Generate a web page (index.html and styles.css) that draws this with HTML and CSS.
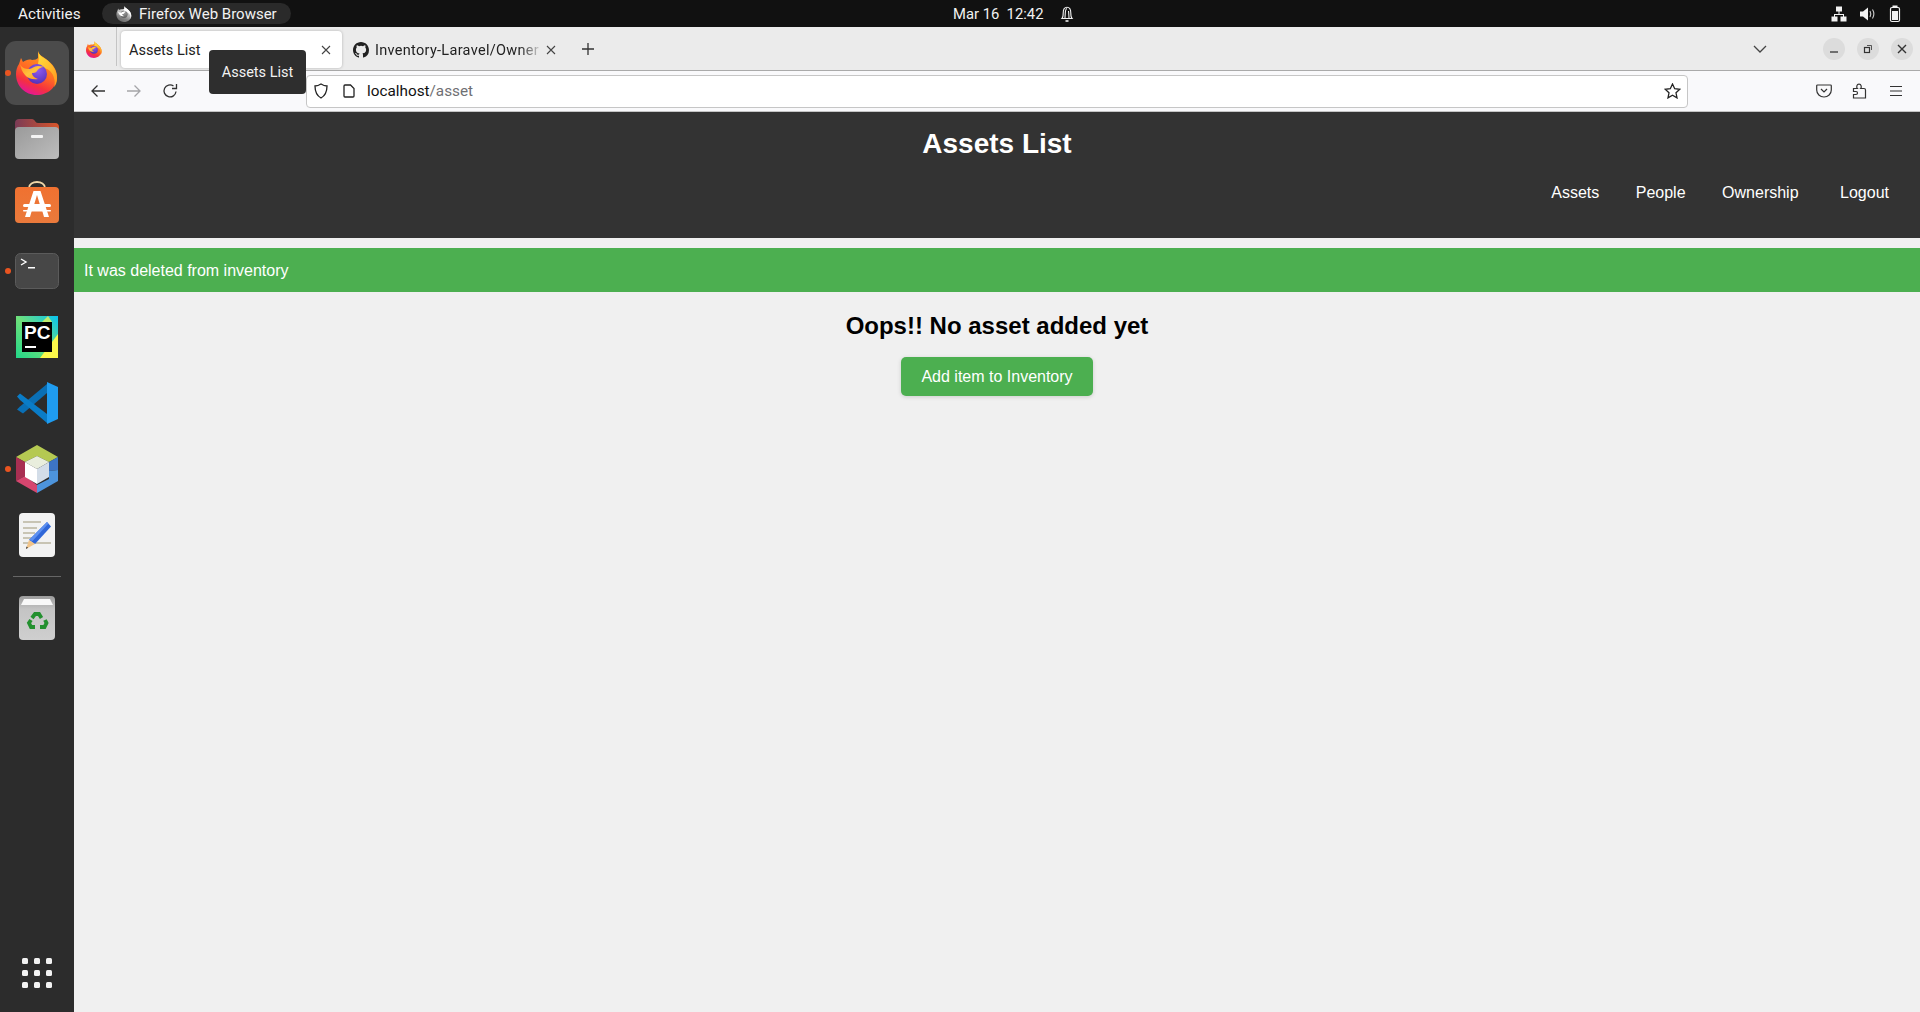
FILE: index.html
```html
<!DOCTYPE html>
<html lang="en">
<head>
<meta charset="utf-8">
<title>Assets List</title>
<link rel="stylesheet" href="styles.css">
</head>
<body>
<svg class="defs" width="0" height="0" aria-hidden="true">
  <defs>
    <linearGradient id="ffBody" x1="0.75" y1="0.1" x2="0.35" y2="1">
      <stop offset="0" stop-color="#ff9a1f"/><stop offset="0.45" stop-color="#ff6a24"/><stop offset="0.75" stop-color="#f5313f"/><stop offset="1" stop-color="#e3169a"/>
    </linearGradient>
    <linearGradient id="ffFlame" x1="0.2" y1="0" x2="0.8" y2="1">
      <stop offset="0" stop-color="#ffde3c"/><stop offset="1" stop-color="#ff9a1f"/>
    </linearGradient>
    <linearGradient id="ffTail" x1="0" y1="0" x2="1" y2="1">
      <stop offset="0" stop-color="#ff9320"/><stop offset="0.5" stop-color="#ffc23c"/><stop offset="1" stop-color="#ff8a1f"/>
    </linearGradient>
    <radialGradient id="ffGlobe" cx="0.55" cy="0.3" r="0.8">
      <stop offset="0" stop-color="#8f5bf0"/><stop offset="1" stop-color="#4d2bb0"/>
    </radialGradient>
    <symbol id="firefox" viewBox="0 0 42 44">
      <path fill="url(#ffBody)" d="M22 0c1 4 4 5 8 8 7 5 11 11 11 18 0 10-9 18-20 18C9 44 0 35 0 23c0-4 1-7 3-10l2-6c1 1 1 3 2 4 3-2 6-3 9-2 3 0 5-1 6-2z"/>
      <path fill="url(#ffFlame)" d="M22 0c1 5 5 6 9 9 6 5 10 11 10 18 0 4-1 7-3 9 1-3 1-6 0-9-1-5-5-9-10-10-3-1-5-2-6-4 1-5 1-9 0-13z"/>
      <circle cx="21" cy="23" r="10" fill="url(#ffGlobe)"/>
      <path fill="url(#ffTail)" d="M4 13c2 4 5 5 9 5 3 0 5-3 9-3 4 0 6 1 6 1-3 0-6 2-7 4-1 2-4 2-5 2 0 3 3 5 6 6-4 1-10 0-13-4-3-3-4-7-5-11z"/>
    </symbol>
  </defs>
</svg>

<header class="topbar">
  <span class="activities">Activities</span>
  <span class="app-pill">
    <svg class="pill-icon" width="16" height="16"><use href="#firefox"/></svg>
    <span>Firefox Web Browser</span>
  </span>
  <span class="clock">
    <span>Mar 16&nbsp;&nbsp;12:42</span>
    <svg class="bell" width="14" height="18" viewBox="0 0 14 18" fill="none" stroke="#f2f2f2" stroke-width="1.1">
      <path d="M2 13.500c1-1 1.200-3 1.200-5.500C3.200 4.500 4.500 2.200 7 2.200s3.800 2.300 3.800 5.800c0 2.500.2 4.500 1.200 5.500z"/>
      <path d="M5 13c.2-3 .2-5 .5-7 .3-1.500 1-2.500 1.500-2.500"/>
      <path d="M9 13c-.2-3-.2-5-.5-7"/>
      <path d="M5.500 16h3" stroke-width="1.600"/>
    </svg>
  </span>
  <span class="tray">
    <svg width="16" height="16" viewBox="0 0 16 16" fill="#f2f2f2"><rect x="5" y="0.500" width="6" height="5"/><rect x="0.500" y="10.500" width="6" height="5"/><rect x="9.500" y="10.500" width="6" height="5"/><path d="M7.500 5h1v3h4.500v3h-1V9H4v2H3V8h4.500z"/></svg>
    <svg width="16" height="16" viewBox="0 0 16 16" fill="#f2f2f2"><path d="M0 5.500h3L8 1.500v13l-5-4H0z"/><path d="M10 5c1 1.800 1 4.200 0 6M12.500 3.500c1.700 2.800 1.700 6.200 0 9" fill="none" stroke="#cfcfcf" stroke-width="1.100"/></svg>
    <svg width="12" height="18" viewBox="0 0 12 18"><rect x="3.500" y="0.500" width="5" height="2" fill="#f2f2f2"/><rect x="1.500" y="2.500" width="9" height="14" rx="1.500" fill="none" stroke="#f2f2f2" stroke-width="1.200"/><rect x="3" y="6" width="6" height="9" fill="#f2f2f2"/></svg>
  </span>
</header>

<div class="desktop">
  <nav class="dock">
    <div class="dock-item active"><i class="dot"></i><svg width="42" height="44"><use href="#firefox"/></svg></div>
    <div class="dock-item">
      <svg width="44" height="42" viewBox="0 0 44 42">
        <defs><linearGradient id="folderTab" x1="0" y1="0" x2="1" y2="0"><stop offset="0" stop-color="#7a3b56"/><stop offset="1" stop-color="#d9562a"/></linearGradient>
        <linearGradient id="folderFront" x1="0" y1="0" x2="1" y2="1"><stop offset="0" stop-color="#9a9a9a"/><stop offset="1" stop-color="#bdbdbd"/></linearGradient></defs>
        <path fill="url(#folderTab)" d="M0 5c0-3 2-4 4-4h13c3 0 3 4 6 4h17c3 0 4 2 4 4v8H0z"/>
        <rect y="9" width="44" height="32" rx="4" fill="url(#folderFront)"/>
        <rect x="16" y="17" width="12" height="3" rx="1" fill="#f4f4f4"/>
      </svg>
    </div>
    <div class="dock-item">
      <svg class="store" width="44" height="44" viewBox="0 0 44 44">
        <defs><linearGradient id="storeBg" x1="0" y1="0" x2="0" y2="1"><stop offset="0" stop-color="#f07130"/><stop offset="1" stop-color="#ea7a3c"/></linearGradient></defs>
        <path d="M14 7c0-8 16-8 16 0" fill="none" stroke="#f0d7a8" stroke-width="1.800"/>
        <rect y="6" width="44" height="36" rx="4" fill="url(#storeBg)"/>
        <path d="M18.500 10h7L34 36h-5l-2-7h-10l-2 7h-5zm.5 14h6l-3-10z" fill="#fff"/>
        <rect x="8" y="23" width="28" height="3" rx="1.500" fill="#fff"/>
        <rect x="8" y="29" width="28" height="1.500" rx="0.700" fill="#fff"/>
      </svg>
    </div>
    <div class="dock-item"><i class="dot"></i>
      <svg width="44" height="36" viewBox="0 0 44 36">
        <rect x="0.500" y="0.500" width="43" height="35" rx="5" fill="#474747" stroke="#5b5b5b"/>
        <path d="M6 6l5 3-5 3" fill="none" stroke="#fff" stroke-width="1.400"/>
        <rect x="13" y="14" width="7" height="1.500" fill="#fff"/>
      </svg>
    </div>
    <div class="dock-item">
      <svg width="42" height="42" viewBox="0 0 42 42">
        <defs><linearGradient id="pcBg" x1="0" y1="1" x2="1" y2="0"><stop offset="0" stop-color="#21d789"/><stop offset="0.5" stop-color="#6fe07a"/><stop offset="1" stop-color="#07c3f2"/></linearGradient></defs>
        <rect width="42" height="42" fill="url(#pcBg)"/>
        <path d="M24 42L42 18V42z" fill="#fcf84a"/>
        <path d="M26 6l6-6 4 6z" fill="#fcf84a" opacity="0.700"/>
        <rect x="6" y="6" width="30" height="30" fill="#000"/>
        <text class="pc-text" x="8" y="23">PC</text>
        <rect x="9" y="30" width="11" height="2" fill="#fff"/>
      </svg>
    </div>
    <div class="dock-item">
      <svg width="42" height="42" viewBox="0 0 42 42">
        <path fill="#0a6fb5" d="M1 27.500l3-3L31 2v9L7 31.500z"/>
        <path fill="#0a7cc7" d="M1 14.500l3-3L31 32v9L7 20.500 4 18z"/>
        <path fill="#1f9cf0" d="M31 0l11 5v32l-11 5z"/>
      </svg>
    </div>
    <div class="dock-item"><i class="dot"></i>
      <svg width="42" height="48" viewBox="0 0 42 48">
        <path fill="#b5c952" d="M21 0l21 12-9 5-12-6-12 6-9-5z"/>
        <path fill="#3d74c4" d="M42 12v13l-9 1v-9z"/>
        <path fill="#4d94dc" d="M42 25v11l-21 12v-8l12-6v-8z"/>
        <path fill="#a82f52" d="M0 12v24l9-5V17z"/>
        <path fill="#d6466f" d="M0 36l21 12v-8L9 31z"/>
        <path fill="#e9eedd" d="M21 11l12 6-12 7-12-7z"/>
        <path fill="#ffffff" d="M9 17l12 7v15L9 32z"/>
        <path fill="#d3dde8" d="M33 17v15l-12 7V24z"/>
      </svg>
    </div>
    <div class="dock-item">
      <svg width="36" height="44" viewBox="0 0 36 44">
        <rect width="36" height="44" rx="4" fill="#f2f2f2"/>
        <g fill="#c8c4b4"><rect x="4" y="8" width="18" height="2"/><rect x="4" y="14" width="14" height="2"/><rect x="4" y="19" width="12" height="2"/><rect x="4" y="24" width="10" height="2"/><rect x="4" y="29" width="28" height="2"/></g>
        <path fill="#2f66d8" d="M28 9l4 4.500-16 17.500-6-4z"/>
        <path fill="#5c8ff0" d="M28 9l1.500 1.600-16 17.400-3.500-1z"/>
        <path fill="#f1c48a" d="M10 27l6 4-9 5z"/>
        <path fill="#333" d="M7.500 33.500l1.500 1.200-2 1.300z"/>
      </svg>
    </div>
    <hr class="dock-sep">
    <div class="dock-item">
      <svg width="36" height="44" viewBox="0 0 36 44">
        <defs><linearGradient id="trashBg" x1="0" y1="0" x2="0" y2="1"><stop offset="0" stop-color="#9c9c9c"/><stop offset="0.3" stop-color="#c4c4c4"/><stop offset="1" stop-color="#cfcfcf"/></linearGradient></defs>
        <rect width="36" height="44" rx="4" fill="url(#trashBg)"/>
        <path d="M5 3h26l3 6H2z" fill="#f8f8f8"/>
        <g fill="none" stroke="#23902f" stroke-width="3.800">
          <path d="M13 22l3-4h4l2.500 4"/>
          <path d="M26 24l1.500 3-2 4H21"/>
          <path d="M16 31h-4l-2-4 2-3"/>
        </g>
      </svg>
    </div>
    <div class="dock-item apps">
      <div class="apps-grid"><i></i><i></i><i></i><i></i><i></i><i></i><i></i><i></i><i></i></div>
    </div>
  </nav>

  <div class="browser">
    <div class="tabstrip">
      <span class="ff-view"><svg width="16" height="17"><use href="#firefox"/></svg></span>
      <i class="strip-sep"></i>
      <div class="tab selected">
        <span class="tab-label">Assets List</span>
        <svg class="x" width="10" height="10" viewBox="0 0 10 10"><path d="M1 1l8 8M9 1l-8 8" stroke="#444" stroke-width="1.100"/></svg>
      </div>
      <div class="tab other">
        <svg width="16" height="16" viewBox="0 0 16 16" fill="#222"><path d="M8 0C3.580 0 0 3.580 0 8c0 3.540 2.290 6.530 5.470 7.590.4.070.55-.17.55-.38 0-.19-.01-.82-.01-1.490-2.010.37-2.530-.49-2.690-.94-.09-.23-.48-.94-.82-1.130-.28-.15-.68-.52-.01-.53.630-.01 1.080.58 1.230.82.720 1.210 1.870.87 2.330.66.070-.52.280-.87.510-1.070-1.780-.2-3.640-.89-3.640-3.950 0-.87.310-1.590.820-2.150-.08-.2-.36-1.020.08-2.120 0 0 .67-.21 2.200.820a7.600 7.600 0 0 1 4 0c1.530-1.040 2.200-.82 2.200-.82.440 1.100.16 1.920.08 2.120.51.560.82 1.270.82 2.150 0 3.070-1.870 3.750-3.650 3.950.29.250.54.730.54 1.480 0 1.070-.01 1.930-.01 2.200 0 .21.150.46.550.38A8.010 8.010 0 0 0 16 8c0-4.420-3.580-8-8-8z"/></svg>
        <span class="tab-label fade">Inventory-Laravel/Owner</span>
        <svg class="x" width="10" height="10" viewBox="0 0 10 10"><path d="M1 1l8 8M9 1l-8 8" stroke="#444" stroke-width="1.100"/></svg>
      </div>
      <svg class="plus" width="12" height="12" viewBox="0 0 12 12"><path d="M6 0v12M0 6h12" stroke="#333" stroke-width="1.300"/></svg>
      <svg class="chev" width="14" height="8" viewBox="0 0 14 8"><path d="M1 1l6 6 6-6" fill="none" stroke="#444" stroke-width="1.300"/></svg>
      <div class="win-buttons">
        <span class="win-btn"><svg width="10" height="10" viewBox="0 0 10 10"><path d="M1 8h8" stroke="#333" stroke-width="1.300"/></svg></span>
        <span class="win-btn"><svg width="10" height="10" viewBox="0 0 10 10" fill="none" stroke="#333"><rect x="1.500" y="3.500" width="5" height="5" stroke-width="1.200"/><path d="M4 1.500h4.500V6" stroke-width="0.800"/></svg></span>
        <span class="win-btn"><svg width="10" height="10" viewBox="0 0 10 10"><path d="M1 1l8 8M9 1l-8 8" stroke="#333" stroke-width="1.400"/></svg></span>
      </div>
    </div>

    <div class="toolbar">
      <svg class="tool" width="16" height="16" viewBox="0 0 16 16" fill="none" stroke="#333" stroke-width="1.300"><path d="M15 8H2M7.500 2.500L2 8l5.500 5.500"/></svg>
      <svg class="tool" width="16" height="16" viewBox="0 0 16 16" fill="none" stroke="#a5a5a8" stroke-width="1.300"><path d="M1 8h13M8.500 2.500L14 8l-5.500 5.500"/></svg>
      <svg class="tool" width="16" height="16" viewBox="0 0 16 16" fill="none" stroke="#333" stroke-width="1.300"><path d="M14 8.500A6 6 0 1 1 11.500 3"/><path d="M14.500 1v4.500H10" /></svg>
      <div class="urlbar">
        <svg class="shield" width="16" height="16" viewBox="0 0 16 16" fill="none" stroke="#222" stroke-width="1.300"><path d="M8 1c2 1.300 4 2 6 2 0 5.500-1.500 9.500-6 12C3.500 12.500 2 8.500 2 3c2 0 4-.7 6-2z"/></svg>
        <svg class="pageic" width="12" height="14" viewBox="0 0 12 14" fill="none" stroke="#222" stroke-width="1.300"><path d="M1 2c0-.6.400-1 1-1h5.500L11 4.500V12c0 .6-.4 1-1 1H2c-.6 0-1-.4-1-1z"/></svg>
        <span class="url"><span>localhost</span><span class="url-path">/asset</span></span>
        <svg class="star" width="17" height="16" viewBox="0 0 17 16" fill="none" stroke="#222" stroke-width="1.300"><path d="M8.500 1l2.200 4.700 5.100.6-3.800 3.500 1 5.100-4.500-2.600L4 14.900l1-5.100L1.200 6.300l5.100-.6z"/></svg>
      </div>
      <svg class="tool pocket" width="16" height="14" viewBox="0 0 16 14" fill="none" stroke="#333" stroke-width="1.200"><path d="M1.500 1h13c.4 0 .8.400.8.800V6c0 4-3.300 7-7.300 7S.7 10 .7 6V1.800c0-.4.400-.8.800-.8z"/><path d="M5 5l3 3 3-3"/></svg>
      <svg class="tool ext" width="16" height="16" viewBox="0 0 16 16" fill="none" stroke="#333" stroke-width="1.200"><path d="M1.500 5.500h3.800c-1-1-.8-4.300 1.700-4.300s2.700 3.300 1.700 4.300H12c.8 0 1.500.7 1.500 1.500v8H1.500v-3.500h2.500c1 0 1.500-1 1.500-1.500S5 8.500 4 8.500H1.500z"/></svg>
      <svg class="tool menu" width="14" height="12" viewBox="0 0 14 12"><path d="M1 1.500h12M1 6h12M1 10.500h12" stroke="#333" stroke-width="1.200"/></svg>
    </div>

    <div class="tooltip">Assets List</div>

    <main class="page">
      <header class="site-header">
        <h1 class="site-title">Assets List</h1>
        <nav class="site-nav">
          <a class="site-link">Assets</a>
          <a class="site-link">People</a>
          <a class="site-link">Ownership</a>
          <a class="site-link logout">Logout</a>
        </nav>
      </header>
      <div class="alert">It was deleted from inventory</div>
      <section class="empty">
        <h2 class="empty-title">Oops!! No asset added yet</h2>
        <a class="btn">Add item to Inventory</a>
      </section>
    </main>
  </div>
</div>
</body>
</html>
```

FILE: styles.css
```css
* { box-sizing: border-box; }
html, body { margin: 0; height: 100%; }
body {
  display: flex;
  flex-direction: column;
  height: 1012px;
  overflow: hidden;
  font-family: Roboto, "Noto Sans", sans-serif;
  background: #f0f0f0;
}
.defs { position: absolute; }

/* GNOME top bar */
.topbar {
  position: relative;
  flex: 0 0 27px;
  display: flex;
  align-items: center;
  background: #111;
  color: #f2f2f2;
  font-size: 15px;
  padding-left: 18px;
}
.activities { width: 84px; font-size: 15.300px; }
.app-pill {
  display: flex;
  align-items: center;
  gap: 7px;
  height: 21px;
  width: 189px;
  padding-left: 14px;
  border-radius: 11px;
  background: #2a2a2a;
}
.pill-icon { filter: grayscale(1) brightness(1.4); }
.clock {
  position: absolute;
  left: 953px;
  display: flex;
  align-items: center;
  gap: 17px;
  font-size: 14.800px;
}
.tray {
  margin-left: auto;
  display: flex;
  align-items: center;
  gap: 13px;
  padding-right: 19px;
}

/* Dock */
.desktop { flex: 1; display: flex; min-height: 0; }
.dock {
  flex: 0 0 74px;
  display: flex;
  flex-direction: column;
  padding: 13px 0 6px;
  background: #2c2c2c;
}
.dock-item {
  position: relative;
  flex: 0 0 66px;
  height: 66px;
  display: flex;
  align-items: center;
  justify-content: center;
}
.dock-item.active::before {
  content: "";
  position: absolute;
  inset: 1px 5px;
  border-radius: 11px;
  background: #4b4b4b;
}
.dock-item svg { position: relative; display: block; }
.dock-item .store { margin-top: -4px; }
.dot {
  position: absolute;
  left: 5px;
  top: 30px;
  width: 6px;
  height: 6px;
  border-radius: 50%;
  background: #e95420;
  z-index: 1;
}
.dock-sep {
  width: 48px;
  height: 1px;
  margin: 8px auto;
  border: 0;
  background: #666;
  flex: none;
}
.apps { margin-top: auto; }
.apps-grid {
  display: grid;
  grid-template-columns: repeat(3, 6px);
  gap: 6px;
}
.apps-grid i { width: 6px; height: 6px; border-radius: 1.500px; background: #f2f2f2; }
.pc-text {
  font-family: "Liberation Sans", sans-serif;
  font-weight: 700;
  font-size: 19px;
  fill: #fff;
}

/* Firefox */
.browser { position: relative; flex: 1; min-width: 0; display: flex; flex-direction: column; }
.tabstrip {
  flex: 0 0 44px;
  display: flex;
  align-items: flex-start;
  padding-top: 4px;
  background: #ebebeb;
  border-bottom: 1px solid #aaa;
  color: #222;
  font-size: 14.500px;
}
.ff-view {
  width: 40px;
  height: 36px;
  display: flex;
  align-items: center;
  justify-content: center;
}
.ff-view svg { display: block; }
.strip-sep { width: 1px; height: 39px; margin: -4px 4px 0 2px; background: #c4c4c4; }
.tab {
  width: 221px;
  height: 37px;
  display: flex;
  align-items: center;
  padding: 0 11px 0 8px;
  border-radius: 4px;
  flex: none;
}
.tab.selected { background: #fff; box-shadow: 0 0 3px rgba(0,0,0,.25); }
.tab.other { margin-left: 3px; padding-right: 10px; }
.tab.other .tab-label { margin-left: 6px; }
.tab-label { flex: 1; min-width: 0; padding-top: 1px; white-space: nowrap; }
.fade {
  letter-spacing: .3px;
  -webkit-mask-image: linear-gradient(to right, #000 86%, transparent 100%);
  mask-image: linear-gradient(to right, #000 86%, transparent 100%);
  margin-right: 3px;
}
.plus { margin: 12px 0 0 16px; flex: none; }
.chev { margin: 14px 0 0 1159px; flex: none; }
.win-buttons { margin: 7px 0 0 auto; display: flex; gap: 12px; padding-right: 7px; }
.win-btn {
  width: 22px;
  height: 22px;
  border-radius: 50%;
  background: #dcdcdc;
  display: flex;
  align-items: center;
  justify-content: center;
}

.toolbar {
  flex: 0 0 41px;
  display: flex;
  align-items: center;
  padding-left: 16px;
  background: #f9f9fb;
  border-bottom: 1px solid #c4c4c4;
}
.tool { flex: none; margin-right: 20px; }
.urlbar {
  width: 1382px;
  height: 33px;
  margin: 0 0 0 108px;
  display: flex;
  align-items: center;
  padding: 0 6px 0 6px;
  background: #fff;
  border: 1px solid #c6c6c6;
  border-radius: 4px;
  font-size: 15.300px;
  flex: none;
}
.pageic { margin-left: 14px; }
.url { margin-left: 12px; color: #111; }
.url-path { color: #6f6f73; }
.star { margin-left: auto; margin-right: 0; }
.pocket { margin: 0 0 0 128px; }
.ext { margin: 0 0 0 20px; }
.menu { margin: 0 0 0 21px; }

.tooltip {
  position: absolute;
  left: 135px;
  top: 23px;
  width: 97px;
  height: 44px;
  display: flex;
  align-items: center;
  justify-content: center;
  border-radius: 4px;
  background: #2e2e2e;
  color: #f2f2f2;
  font-size: 14.500px;
  z-index: 2;
}

/* Page content */
.page {
  flex: 1;
  background: #f0f0f0;
  font-family: "Liberation Sans", Arial, sans-serif;
  font-size: 16px;
}
.site-header {
  height: 126px;
  padding-top: 16px;
  background: #333;
  color: #fff;
}
.site-title { margin: 0; text-align: center; font-size: 28px; line-height: 32px; font-weight: 700; }
.site-nav {
  display: flex;
  justify-content: flex-end;
  gap: 36.500px;
  margin-top: 24px;
  padding-right: 31px;
  line-height: 18px;
}
.logout { margin-left: 5px; }
.alert {
  margin-top: 10px;
  height: 44px;
  padding: 14px 10px 12px;
  line-height: 18px;
  background: #4caf50;
  color: #fff;
}
.empty { display: flex; flex-direction: column; align-items: center; padding-top: 20px; }
.empty-title { margin: 0; font-size: 24px; line-height: 28px; font-weight: 700; color: #000; }
.btn {
  margin-top: 17px;
  width: 192px;
  height: 39px;
  display: flex;
  align-items: center;
  justify-content: center;
  border-radius: 5px;
  background: #4caf50;
  color: #fff;
  box-shadow: 0 1px 4px rgba(0,0,0,.15);
}
```
